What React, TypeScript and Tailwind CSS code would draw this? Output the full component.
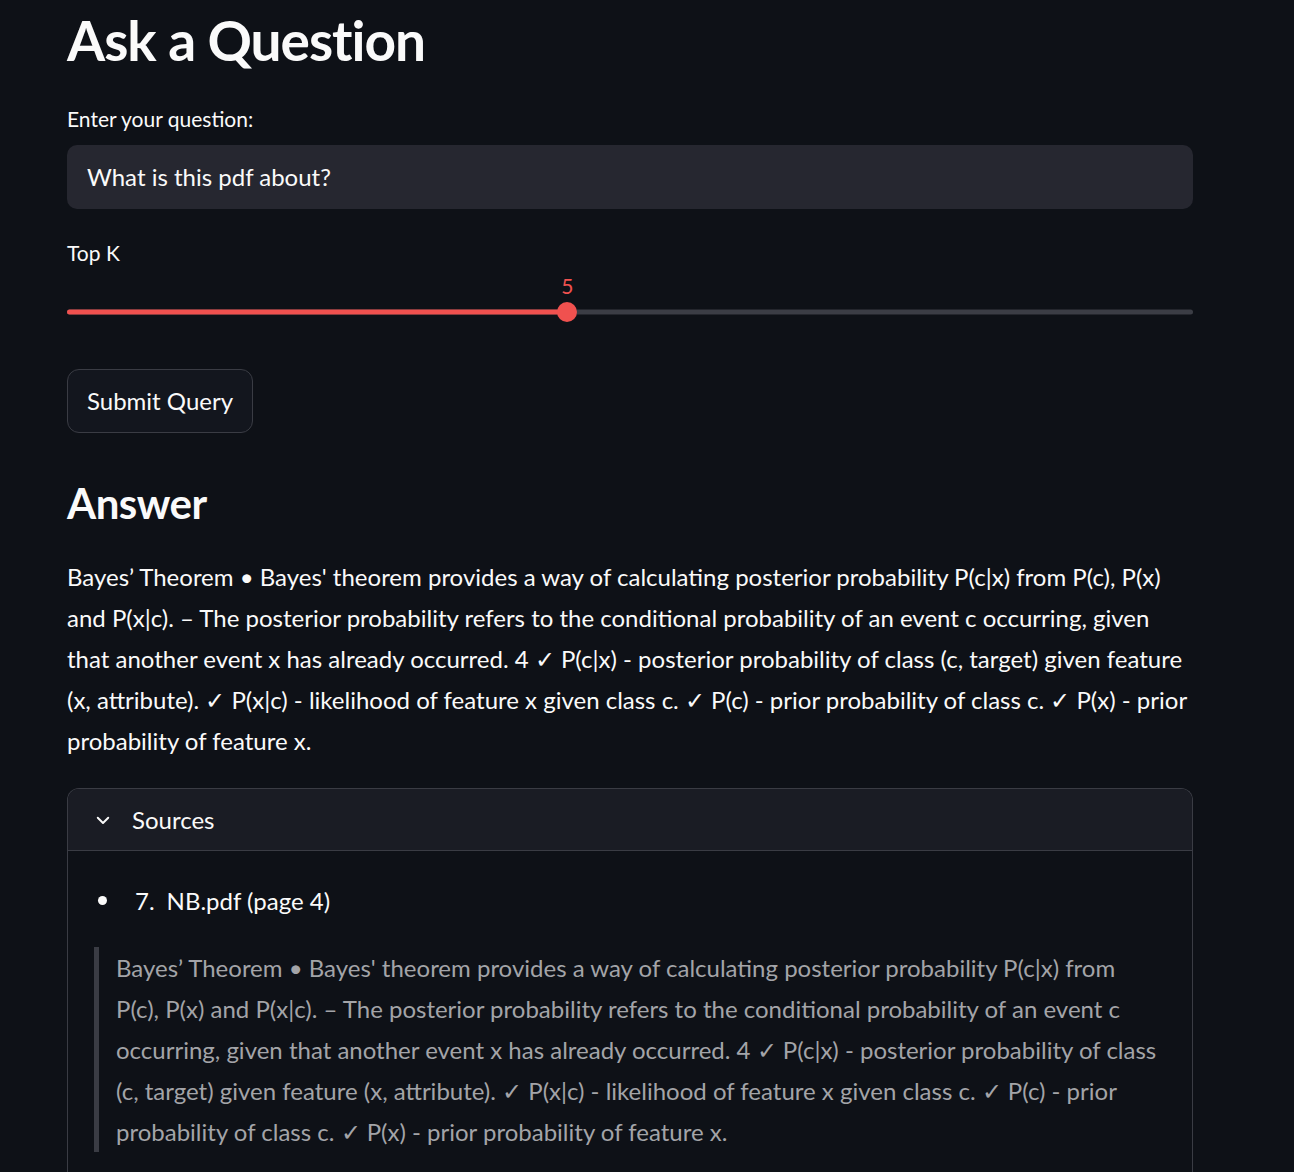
import React from 'react';

const answer =
  "Bayes’ Theorem • Bayes' theorem provides a way of calculating posterior probability P(c|x) from P(c), P(x) and P(x|c). – The posterior probability refers to the conditional probability of an event c occurring, given that another event x has already occurred. 4 ✓ P(c|x) - posterior probability of class (c, target) given feature (x, attribute). ✓ P(x|c) - likelihood of feature x given class c. ✓ P(c) - prior probability of class c. ✓ P(x) - prior probability of feature x.";

function Slider({ value, min, max }: { value: number; min: number; max: number }) {
  const pct = ((value - min) / (max - min)) * 100;
  return (
    <div className="relative h-[60px]">
      <div className="absolute left-0 right-0 top-[46px] h-[5px] -translate-y-1/2 rounded-full bg-[#3b3d45]" />
      <div
        className="absolute left-0 top-[46px] h-[5px] -translate-y-1/2 rounded-full bg-[#f0514f]"
        style={{ width: `${pct}%` }}
      />
      <div
        className="absolute top-[46px] h-[20px] w-[20px] -translate-x-1/2 -translate-y-1/2 rounded-full bg-[#f0514f]"
        style={{ left: `${pct}%` }}
      />
      <div
        className="absolute top-[9px] -translate-x-1/2 text-[21px] leading-none text-[#f0514f]"
        style={{ left: `${pct}%` }}
      >
        {value}
      </div>
    </div>
  );
}

export default function App() {
  return (
    <div
      className="min-h-[1172px] bg-[#0e1117] text-[#fafafa]"
      style={{ fontFamily: "'Lato', 'Noto Sans', sans-serif" }}
    >
      <div className="w-[1126px] ml-[67px] pb-10">
        <h1 className="pt-[10px] text-[55px] font-bold leading-[60px] tracking-[-1px]">Ask a Question</h1>

        <label className="mt-[36px] block text-[21px] leading-[26px]">Enter your question:</label>
        <div className="mt-[13px] flex h-[64px] items-center rounded-[10px] bg-[#262730] px-[20px] text-[24px]">
          What is this pdf about?
        </div>

        <div className="mt-[31px] text-[21px] leading-[26px]">Top K</div>
        <Slider value={5} min={1} max={10} />

        <button className="mt-[43px] flex h-[64px] items-center rounded-[12px] border border-[#3a3c44] bg-[#13161e] px-[19px] text-[24px]">
          Submit Query
        </button>

        <h2 className="mt-[45px] text-[42px] font-bold leading-[50px] tracking-[-0.5px]">Answer</h2>

        <p className="mt-[28px] text-[24px] leading-[41px]">{answer}</p>

        {/* sources expander */}
        <div className="mt-[27px] overflow-hidden rounded-t-[12px] border border-b-0 border-[#3a3c44]">
          <div className="flex h-[62px] items-center gap-[20px] border-b border-[#3a3c44] bg-[#1a1c24] px-[26px]">
            <svg width="18" height="18" viewBox="0 0 24 24" fill="none" stroke="#fafafa" strokeWidth="2.6" strokeLinecap="round" strokeLinejoin="round">
              <path d="M5 9l7 7 7-7" />
            </svg>
            <span className="text-[24px]">Sources</span>
          </div>
          <div className="px-[26px] pt-[29px] pb-[40px]">
            <div className="flex items-center text-[24px] leading-[41px]">
              <span className="ml-[4px] inline-block h-[9px] w-[9px] rounded-full bg-[#fafafa]" />
              <span className="ml-[28px]">7.</span>
              <span className="ml-[12px]">NB.pdf (page 4)</span>
            </div>
            <blockquote className="mt-[26px] border-l-[5px] border-[#3a3c44] pl-[17px] pr-[8px] text-[24px] leading-[41px] text-[#a3a4a8]">
              {answer}
            </blockquote>
          </div>
        </div>
      </div>
    </div>
  );
}
